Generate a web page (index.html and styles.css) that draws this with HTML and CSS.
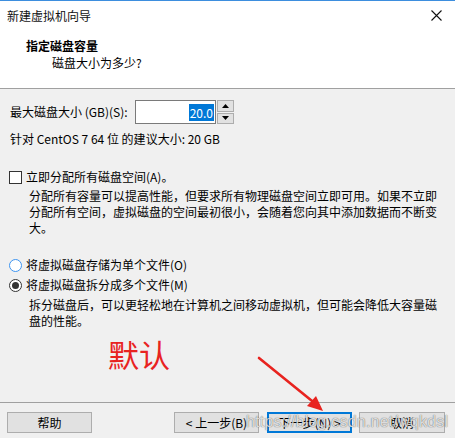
FILE: index.html
```html
<!DOCTYPE html>
<html lang="zh-CN">
<head>
<meta charset="utf-8">
<title>新建虚拟机向导</title>
<link rel="stylesheet" href="styles.css">
</head>
<body>
<div class="dialog">
  <div class="titlebar">
    <span class="title">新建虚拟机向导</span>
    <svg class="close" width="11" height="11" viewBox="0 0 11 11"><path d="M0.5 0.5 L10.5 10.5 M10.5 0.5 L0.5 10.5" stroke="#111" stroke-width="1.1" fill="none"/></svg>
  </div>
  <div class="header">
    <div class="h-title">指定磁盘容量</div>
    <div class="h-sub">磁盘大小为多少?</div>
  </div>
  <div class="content">
    <div class="size-row">
      <span class="size-label">最大磁盘大小 (GB)(S):</span>
      <div class="spin-input"><span class="sel">20.0</span></div>
      <div class="spinner">
        <div class="spin-btn"><svg width="7" height="4" viewBox="0 0 7 4"><path d="M3.5 0 L7 4 L0 4 Z" fill="#000"/></svg></div>
        <div class="spin-btn"><svg width="7" height="4" viewBox="0 0 7 4"><path d="M0 0 L7 0 L3.5 4 Z" fill="#000"/></svg></div>
      </div>
    </div>
    <div class="recommend">针对 CentOS 7 64 位 的建议大小: 20 GB</div>
    <div class="opt-row check-row">
      <span class="checkbox"></span>
      <span>立即分配所有磁盘空间(A)。</span>
    </div>
    <div class="desc">分配所有容量可以提高性能，但要求所有物理磁盘空间立即可用。如果不立即分配所有空间，虚拟磁盘的空间最初很小，会随着您向其中添加数据而不断变大。</div>
    <div class="opt-row radio-row first">
      <span class="radio focus"></span>
      <span>将虚拟磁盘存储为单个文件(O)</span>
    </div>
    <div class="opt-row radio-row second">
      <span class="radio checked"></span>
      <span>将虚拟磁盘拆分成多个文件(M)</span>
    </div>
    <div class="desc desc2">拆分磁盘后，可以更轻松地在计算机之间移动虚拟机，但可能会降低大容量磁盘的性能。</div>
  </div>
  <div class="footer">
    <button class="btn">帮助</button>
    <div class="spacer"></div>
    <button class="btn">&lt; 上一步(B)</button>
    <button class="btn default">下一步(N) &gt;</button>
    <button class="btn cancel">取消</button>
  </div>
  <div class="note">默认</div>
  <svg class="arrow" width="80" height="70" viewBox="0 0 80 70">
    <path d="M4 3 L62 50" stroke="#e8231f" stroke-width="2.6" stroke-linecap="round" fill="none"/>
    <path d="M68 56 L52 51 L61 41 Z" fill="#e8231f"/>
  </svg>
  <div class="watermark">https://blog.csdn.net/wqkdsl</div>
</div>
</body>
</html>
```
FILE: styles.css
```css
html, body {
  margin: 0;
  padding: 0;
}
body {
  font-family: "Noto Sans CJK SC", "Microsoft YaHei", sans-serif;
  font-size: 12px;
  color: #000;
  background: #f0f0f0;
}
.dialog {
  position: relative;
  width: 455px;
  height: 438px;
  box-sizing: border-box;
  border-top: 1px solid #3d8ede;
  background: #f0f0f0;
  display: flex;
  flex-direction: column;
  overflow: hidden;
}
.titlebar {
  height: 29px;
  background: #fff;
  display: flex;
  align-items: center;
  justify-content: space-between;
  padding: 0 13px 0 7px;
  line-height: 16px;
}
.title {
  color: #111;
}
.close {
  display: block;
}
.header {
  background: #fff;
  box-sizing: border-box;
  padding: 8px 0 0 26px;
  line-height: 16px;
  border-bottom: 1px solid #a0a0a0;
  height: 59px;
}
.h-title {
  font-weight: bold;
}
.h-sub {
  padding-left: 26px;
  margin-top: 1px;
}
.content {
  flex: 1;
  display: flex;
  flex-direction: column;
  line-height: 16px;
  border-bottom: 1px solid #a0a0a0;
}
.size-row {
  display: flex;
  align-items: center;
  margin-top: 11px;
  padding-left: 10px;
  height: 24px;
}
.size-label {
  width: 125px;
}
.spin-input {
  width: 81px;
  height: 24px;
  box-sizing: border-box;
  border: 1px solid #7a7a7a;
  background: #fff;
  display: flex;
  align-items: center;
  justify-content: flex-end;
  padding-right: 1px;
}
.sel {
  background: #0078d7;
  color: #fff;
  line-height: 17px;
  padding: 0 1px;
}
.spinner {
  margin-left: 1px;
  width: 17px;
  height: 24px;
  display: flex;
  flex-direction: column;
  gap: 1px;
}
.spin-btn {
  flex: 1;
  background: #e1e1e1;
  border: 1px solid #adadad;
  display: flex;
  align-items: center;
  justify-content: center;
}
.spin-btn svg {
  display: block;
}
.recommend {
  margin-top: 7px;
  padding-left: 10px;
}
.opt-row {
  display: flex;
  align-items: center;
  height: 16px;
  padding-left: 9px;
}
.check-row {
  margin-top: 22px;
}
.checkbox {
  width: 13px;
  height: 13px;
  box-sizing: border-box;
  border: 1px solid #333;
  background: #fff;
  margin-right: 4px;
}
.desc {
  margin-top: 3px;
  padding-left: 29px;
  width: 412px;
}
.radio-row.first {
  margin-top: 21px;
}
.radio-row.second {
  margin-top: 4px;
}
.radio {
  width: 13px;
  height: 13px;
  box-sizing: border-box;
  border-radius: 50%;
  border: 1px solid #333;
  background: #fff;
  margin-right: 4px;
  display: flex;
  align-items: center;
  justify-content: center;
}
.radio.focus {
  border-color: #3d94f0;
}
.radio.checked::after {
  content: "";
  width: 7px;
  height: 7px;
  border-radius: 50%;
  background: #333;
}
.desc2 {
  margin-top: 4px;
}
.footer {
  height: 35px;
  box-sizing: border-box;
  display: flex;
  align-items: flex-start;
  padding: 9px 10px 0 7px;
  gap: 8px;
}
.spacer {
  flex: 1;
}
.btn {
  width: 85px;
  height: 21px;
  box-sizing: border-box;
  border: 1px solid #adadad;
  background: #e1e1e1;
  font-family: inherit;
  font-size: 12px;
  color: #000;
  padding: 0;
  line-height: 17px;
}
.btn.default {
  border-color: #0078d7;
  box-shadow: inset 0 0 0 1px #0078d7;
}
.btn.cancel {
  margin-left: -1px;
  width: 86px;
}
.note {
  position: absolute;
  left: 108px;
  top: 333px;
  font-size: 31px;
  line-height: 40px;
  color: #e8231f;
}
.arrow {
  position: absolute;
  left: 255px;
  top: 354px;
}
.watermark {
  position: absolute;
  left: 246px;
  top: 410px;
  font-family: "Liberation Sans", Arial, sans-serif;
  font-size: 16px;
  line-height: 22px;
  color: rgba(255, 255, 255, 0.8);
  text-shadow: 0 0 1px rgba(0, 0, 0, 0.5), 0 0 1px rgba(0, 0, 0, 0.3);
  letter-spacing: 0.2px;
  pointer-events: none;
}
```
